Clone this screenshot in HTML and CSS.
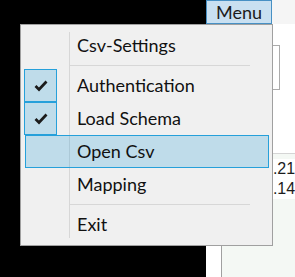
FILE: index.html
```html
<!DOCTYPE html>
<html>
<head>
    <title>Csv Import</title>
    <link rel="stylesheet" href="styles.css">
</head>
<body>
<div class="screen">
    <div class="desktop"></div>
    <div class="app">
        <div class="toolbar">
            <button class="menu-button">Menu</button>
        </div>
        <div class="content">
            <div class="fields">
                <div class="field"></div>
                <div class="field"></div>
            </div>
            <div class="grid">
                <div class="row"><span class="cell">0.21</span></div>
                <div class="row"><span class="cell">0.14</span></div>
            </div>
        </div>
    </div>

    <div class="context-menu">
        <div class="item"><span class="icon"></span><span class="label">Csv-Settings</span></div>
        <div class="separator"></div>
        <div class="item checked">
            <span class="icon"><svg width="14" height="12" viewBox="0 0 14 12"><polyline points="1.5,6 5,9.5 12.5,1.5" fill="none" stroke="#1b1b1b" stroke-width="2.7"/></svg></span>
            <span class="label">Authentication</span>
        </div>
        <div class="item checked">
            <span class="icon"><svg width="14" height="12" viewBox="0 0 14 12"><polyline points="1.5,6 5,9.5 12.5,1.5" fill="none" stroke="#1b1b1b" stroke-width="2.7"/></svg></span>
            <span class="label">Load Schema</span>
        </div>
        <div class="item active"><span class="icon"></span><span class="label">Open Csv</span></div>
        <div class="item"><span class="icon"></span><span class="label">Mapping</span></div>
        <div class="separator"></div>
        <div class="item"><span class="icon"></span><span class="label">Exit</span></div>
    </div>
</div>
</body>
</html>
```

FILE: styles.css
```css
body { margin: 0; font-family: Lato, "Liberation Sans", sans-serif; }
.screen { position: relative; display: flex; width: 295px; height: 277px; overflow: hidden; background: #000; }
.desktop { width: 206px; flex-shrink: 0; background: #000; }
.app { flex: 1; min-width: 0; overflow: hidden; display: flex; flex-direction: column; background: #fff; }
.toolbar { height: 24px; flex-shrink: 0; display: flex; background: #f5f5f5; }
.menu-button { width: 66px; height: 24px; flex-shrink: 0; padding: 0 0 2px; font-family: inherit; font-size: 18px; color: #1c1c1c; background: #c9e0f1; border: 1px solid #4790c4; }
.content { flex: 1; display: flex; flex-direction: column; padding-left: 15px; background: #fff; }
.fields { display: flex; gap: 15px; margin-top: 21px; padding-left: 10px; height: 45px; }
.field { width: 47px; flex-shrink: 0; border: 1px solid #ababab; background: #fff; }
.field + .field { width: 40px; }
.grid { flex: 1; margin-top: 63px; border-left: 1px solid #a0a0a0; border-top: 1px solid #d5d5d5; background: #f4f8f4; padding-top: 5px; }
.row { height: 20px; display: flex; align-items: center; background: #fff; }
.cell { padding-left: 42px; white-space: nowrap; font-family: "Liberation Sans", sans-serif; font-size: 16px; color: #1c1c1c; }

.context-menu { position: absolute; left: 20px; top: 24px; width: 245px; padding: 4px 3px; border: 1px solid #a0a0a0; background: linear-gradient(#d7d7d7, #d7d7d7) no-repeat 48px 7px / 1px calc(100% - 14px), #f0f0f0; }
.item { display: flex; align-items: center; height: 33px; box-sizing: border-box; font-size: 18px; color: #111; }
.icon { width: 33px; height: 33px; box-sizing: border-box; display: flex; align-items: center; justify-content: center; }
.label { margin-left: 20px; padding-bottom: 1px; }
.checked .icon { border: 1px solid #26a0da; background: rgba(38, 160, 218, 0.24); }
.active { margin-left: 1px; border: 1px solid #26a0da; background: rgba(38, 160, 218, 0.24); }
.active .icon { width: 31px; }
.separator { height: 7px; margin-left: 46px; margin-right: 19px; background: linear-gradient(#d7d7d7, #d7d7d7) no-repeat 0 3px / 100% 1px; }
```
